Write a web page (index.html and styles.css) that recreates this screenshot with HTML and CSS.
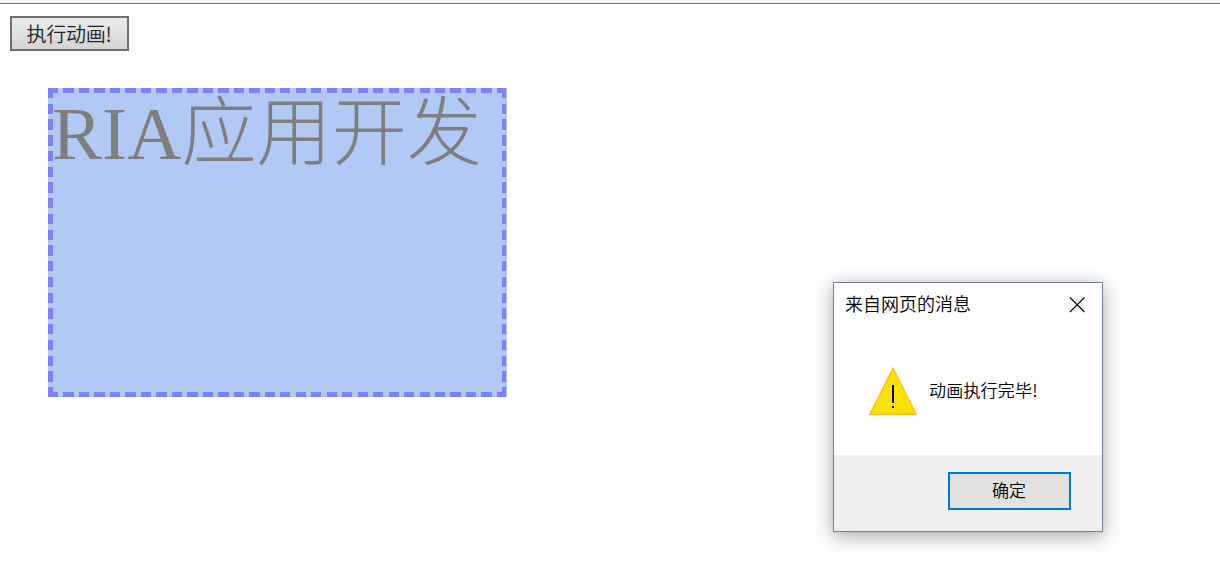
FILE: index.html
```html
<!doctype html>
<html lang="zh-CN">

<head>
    <meta charset="utf-8">
    <title>RIA应用开发</title>
    <link rel="stylesheet" href="styles.css">
</head>

<body>
    <div class="toolbar"></div>
    <button class="run">执行动画!</button>
    <div class="box">RIA应用开发</div>

    <div class="dialog">
        <div class="title">
            <span>来自网页的消息</span>
            <svg class="close" width="16" height="16" viewBox="0 0 16 16">
                <path d="M1 0.5L15.5 15M15.5 0.5L1 15" stroke="#000" stroke-width="1.1" fill="none"/>
            </svg>
        </div>
        <div class="message">
            <svg width="48" height="48" viewBox="0 0 48 48">
                <path d="M24 1L47.2 47.4H0.8Z" fill="#fde100" stroke="#ffb914" stroke-width="1.2"/>
                <path d="M23 18h2v18h-2zM23 39h2v2h-2z" fill="#000"/>
            </svg>
            <span class="text">动画执行完毕!</span>
        </div>
        <div class="footer">
            <button class="ok">确定</button>
        </div>
    </div>
</body>

</html>
```

FILE: styles.css
```css
body {
    margin: 0;
    height: 572px;
    overflow: hidden;
    background-color: white;
    font-family: "Liberation Serif", "Noto Sans CJK SC", serif;
}

button {
    display: block;
    box-sizing: border-box;
    padding: 0;
    font-family: "Noto Sans CJK SC", sans-serif;
    border-radius: 0;
}

.toolbar {
    height: 3px;
    background-color: #f5f5f5;
    border-bottom: 1px solid #707070;
}

.run {
    width: 119px;
    height: 35px;
    margin: 12px 0 0 10px;
    padding-right: 1px;
    border: 2px solid #707070;
    background: linear-gradient(#ebebeb, #d5d5d5);
    color: #222;
    font-size: 20px;
    font-weight: 350;
    line-height: 30px;
    letter-spacing: -0.3px;
}

/* dashed border drawn as four strips: top, bottom, left, right */
.box {
    box-sizing: border-box;
    width: 459px;
    height: 309px;
    margin: 37px 0 0 48px;
    padding: 5px 4px;
    background:
        repeating-linear-gradient(90deg, blue 0 10.3px, transparent 10.3px 15.48px) 0 0 / 458px 5px no-repeat,
        repeating-linear-gradient(90deg, blue 0 10.3px, transparent 10.3px 15.48px) 0 100% / 458px 5px no-repeat,
        repeating-linear-gradient(180deg, blue 0 10.3px, transparent 10.3px 15.74px) 0 0 / 5px 309px no-repeat,
        repeating-linear-gradient(180deg, blue 0 10.3px, transparent 10.3px 15.74px) 454px 0 / 4px 309px no-repeat,
        cornflowerblue;
    color: black;
    font-size: 75px;
    font-weight: 300;
    line-height: 82px;
    letter-spacing: 0.1px;
    white-space: nowrap;
    opacity: 0.5;
}

/* message box floating over the page */
.dialog {
    position: absolute;
    left: 833px;
    top: 282px;
    box-sizing: border-box;
    width: 270px;
    height: 250px;
    display: flex;
    flex-direction: column;
    border: 1px solid #6f7d92;
    background-color: white;
    box-shadow: 0 4px 18px rgba(0, 0, 0, 0.36);
    color: black;
    font-family: "Noto Sans CJK SC", sans-serif;
    font-weight: 350;
}

.title {
    display: flex;
    justify-content: space-between;
    align-items: center;
    height: 43px;
    padding: 0 17px 0 11px;
    font-size: 18px;
}

.title span {
    padding-bottom: 3px;
}

.message {
    display: flex;
    align-items: center;
    flex: 1;
    gap: 12px;
    padding: 1px 0 0 35px;
    font-size: 17px;
}

.text {
    padding-bottom: 4px;
    letter-spacing: 0.2px;
}

.footer {
    display: flex;
    justify-content: flex-end;
    height: 59px;
    padding: 17px 31px 0 0;
    background-color: #f0f0f0;
}

.ok {
    width: 123px;
    height: 38px;
    padding: 0 1px 3px 0;
    border: 2px solid #0078d7;
    background-color: #e1e1e1;
    color: black;
    font-size: 17px;
    font-weight: 350;
}
```
